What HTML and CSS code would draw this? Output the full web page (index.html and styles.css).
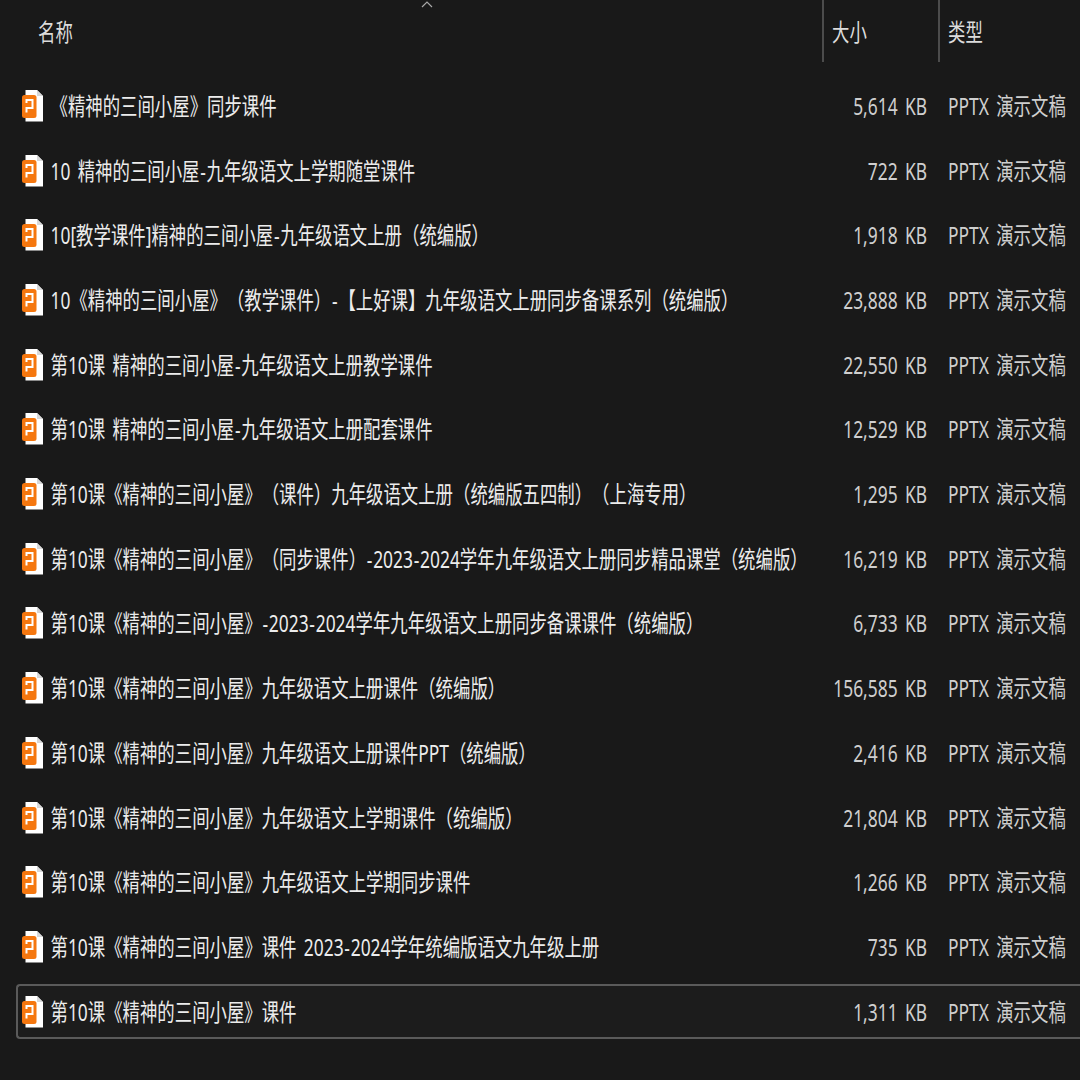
FILE: index.html
```html
<!DOCTYPE html>
<html lang="zh-CN">
<head>
<meta charset="utf-8">
<title>文件列表</title>
<link rel="stylesheet" href="styles.css">
</head>
<body>
<svg class="defs" width="0" height="0" aria-hidden="true">
  <symbol id="ppt" viewBox="0 0 22 34">
    <path d="M3.500 1H15L21 7V32.500H3.500Z" fill="#fff"/>
    <path d="M15 1L21 7H15Z" fill="#d8d8d8"/>
    <rect x="0" y="6" width="14.500" height="23" rx="2.500" fill="#f5770f"/>
    <path d="M4.500 23.500V19H10.500V11H4.500V14" fill="none" stroke="#fff" stroke-width="2"/>
  </symbol>
</svg>
<main class="explorer">
  <header class="head">
    <span class="caret"><svg width="12" height="7" viewBox="0 0 12 7"><path d="M1 6L6 1L11 6" fill="none" stroke="#a8a8a8" stroke-width="1.200"/></svg></span>
    <div class="hcol hname"><span class="t">名称</span></div>
    <div class="hcol hsize"><span class="t">大小</span></div>
    <div class="hcol htype"><span class="t">类型</span></div>
  </header>
  <ul class="list">
    <li class="row"><div class="name"><svg class="icon"><use href="#ppt"/></svg><span class="t">《精神的三间小屋》同步课件</span></div><div class="size"><span class="t">5,614 KB</span></div><div class="type"><span class="t">PPTX 演示文稿</span></div></li>
    <li class="row"><div class="name"><svg class="icon"><use href="#ppt"/></svg><span class="t">10 精神的三间小屋<span class="hy">-</span>九年级语文上学期随堂课件</span></div><div class="size"><span class="t">722 KB</span></div><div class="type"><span class="t">PPTX 演示文稿</span></div></li>
    <li class="row"><div class="name"><svg class="icon"><use href="#ppt"/></svg><span class="t">10[教学课件]精神的三间小屋<span class="hy">-</span>九年级语文上册（统编版）</span></div><div class="size"><span class="t">1,918 KB</span></div><div class="type"><span class="t">PPTX 演示文稿</span></div></li>
    <li class="row"><div class="name"><svg class="icon"><use href="#ppt"/></svg><span class="t">10《精神的三间小屋》（教学课件）<span class="hy">-</span>【上好课】九年级语文上册同步备课系列（统编版）</span></div><div class="size"><span class="t">23,888 KB</span></div><div class="type"><span class="t">PPTX 演示文稿</span></div></li>
    <li class="row"><div class="name"><svg class="icon"><use href="#ppt"/></svg><span class="t">第10课 精神的三间小屋<span class="hy">-</span>九年级语文上册教学课件</span></div><div class="size"><span class="t">22,550 KB</span></div><div class="type"><span class="t">PPTX 演示文稿</span></div></li>
    <li class="row"><div class="name"><svg class="icon"><use href="#ppt"/></svg><span class="t">第10课 精神的三间小屋<span class="hy">-</span>九年级语文上册配套课件</span></div><div class="size"><span class="t">12,529 KB</span></div><div class="type"><span class="t">PPTX 演示文稿</span></div></li>
    <li class="row"><div class="name"><svg class="icon"><use href="#ppt"/></svg><span class="t">第10课《精神的三间小屋》（课件）九年级语文上册（统编版五四制）（上海专用）</span></div><div class="size"><span class="t">1,295 KB</span></div><div class="type"><span class="t">PPTX 演示文稿</span></div></li>
    <li class="row"><div class="name"><svg class="icon"><use href="#ppt"/></svg><span class="t">第10课《精神的三间小屋》（同步课件）<span class="hy">-</span>2023<span class="hy">-</span>2024学年九年级语文上册同步精品课堂（统编版）</span></div><div class="size"><span class="t">16,219 KB</span></div><div class="type"><span class="t">PPTX 演示文稿</span></div></li>
    <li class="row"><div class="name"><svg class="icon"><use href="#ppt"/></svg><span class="t">第10课《精神的三间小屋》<span class="hy">-</span>2023<span class="hy">-</span>2024学年九年级语文上册同步备课课件（统编版）</span></div><div class="size"><span class="t">6,733 KB</span></div><div class="type"><span class="t">PPTX 演示文稿</span></div></li>
    <li class="row"><div class="name"><svg class="icon"><use href="#ppt"/></svg><span class="t">第10课《精神的三间小屋》九年级语文上册课件（统编版）</span></div><div class="size"><span class="t">156,585 KB</span></div><div class="type"><span class="t">PPTX 演示文稿</span></div></li>
    <li class="row"><div class="name"><svg class="icon"><use href="#ppt"/></svg><span class="t">第10课《精神的三间小屋》九年级语文上册课件PPT（统编版）</span></div><div class="size"><span class="t">2,416 KB</span></div><div class="type"><span class="t">PPTX 演示文稿</span></div></li>
    <li class="row"><div class="name"><svg class="icon"><use href="#ppt"/></svg><span class="t">第10课《精神的三间小屋》九年级语文上学期课件（统编版）</span></div><div class="size"><span class="t">21,804 KB</span></div><div class="type"><span class="t">PPTX 演示文稿</span></div></li>
    <li class="row"><div class="name"><svg class="icon"><use href="#ppt"/></svg><span class="t">第10课《精神的三间小屋》九年级语文上学期同步课件</span></div><div class="size"><span class="t">1,266 KB</span></div><div class="type"><span class="t">PPTX 演示文稿</span></div></li>
    <li class="row"><div class="name"><svg class="icon"><use href="#ppt"/></svg><span class="t">第10课《精神的三间小屋》课件 2023<span class="hy">-</span>2024学年统编版语文九年级上册</span></div><div class="size"><span class="t">735 KB</span></div><div class="type"><span class="t">PPTX 演示文稿</span></div></li>
    <li class="row selected"><div class="name"><svg class="icon"><use href="#ppt"/></svg><span class="t">第10课《精神的三间小屋》课件</span></div><div class="size"><span class="t">1,311 KB</span></div><div class="type"><span class="t">PPTX 演示文稿</span></div></li>
  </ul>
</main>
</body>
</html>
```
FILE: styles.css
```css
* { box-sizing: border-box; }
html, body { margin: 0; height: 100%; background: #191919; overflow: hidden; }
body { font-family: "Noto Sans", "Noto Sans CJK SC", sans-serif; color: #ececec; font-size: 17.4px; text-spacing-trim: space-all; font-kerning: none; word-spacing: 2.800px; }
.defs { position: absolute; }
.explorer { width: 1080px; height: 1080px; display: flex; flex-direction: column; }
.t { display: inline-block; white-space: nowrap; transform: scaleY(1.35); transform-origin: 50% 50%; line-height: 24px; }
.hy { margin: 0 0.750px; }

.head { position: relative; height: 62px; display: grid; grid-template-columns: 822px 116px 1fr; flex: none; }
.caret { position: absolute; left: 421px; top: 1px; line-height: 0; }
.hcol { display: flex; align-items: center; padding-top: 1px; color: #dcdcdc; }
.hname { padding-left: 38px; }
.hsize { padding-left: 8px; border-left: 2px solid #4c4c4c; }
.htype { padding-left: 8px; border-left: 2px solid #4c4c4c; }

.list { list-style: none; margin: 11.650px 0 0; padding: 0 0 0 16px; }
.row { height: 64.700px; display: grid; grid-template-columns: 805px 104px 1fr; align-items: center; border: 2px solid transparent; border-right: 0; }
.selected { height: 55px; margin-top: 5px; border-color: #5a5a5a; border-radius: 4px 0 0 4px; background: #1c1c1c; }
.name { display: flex; align-items: center; gap: 6.500px; padding-left: 4px; }
.icon { width: 22px; height: 34px; flex: none; }
.size { text-align: right; color: #cfcfcf; }
.type { padding-left: 21px; color: #cfcfcf; }
```
